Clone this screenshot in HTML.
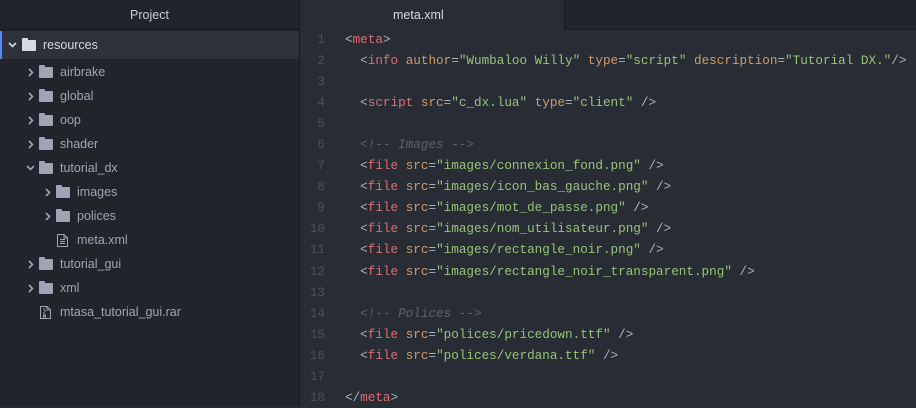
<!DOCTYPE html>
<html><head><style>
*{margin:0;padding:0;box-sizing:border-box}
body{width:916px;height:406px;overflow:hidden;background:#282c34;font-family:"Liberation Sans",sans-serif;position:relative}
#side{position:absolute;left:0;top:0;width:300px;height:406px;background:#21252b;border-right:1px solid #181a1f}
#side .hd{height:30px;line-height:30px;text-align:center;color:#c8ccd4;font-size:12.5px;border-bottom:1px solid #181a1f}
.row{position:absolute;left:0;width:299px;height:24px;line-height:24px;font-size:12.5px;color:#9da5b4}
.sel{background:#2c313a;color:#d7dae0;height:28px;line-height:28px}
.sel:before{content:"";position:absolute;left:0;top:0;width:2px;height:28px;background:#568af2}
.chev{position:absolute;top:0;width:8px;height:100%}
.chev svg{position:absolute;top:50%;margin-top:-4px}
.fold{position:absolute;width:14px;height:11px;top:50%;margin-top:-5px;background:#9da5b4;border-radius:1px}
.fold:before{content:"";position:absolute;left:0;top:-2px;width:6px;height:3px;background:#9da5b4;border-radius:1px 1px 0 0}
.sel .fold,.sel .fold:before{background:#d7dae0}
.lbl{position:absolute;top:0}
#tabs{position:absolute;left:301px;top:0;right:0;height:30px;background:#21252b}
#tab{position:absolute;left:0;top:0;width:264px;height:30px;background:#282c34;color:#d7dae0;font-size:12.5px;text-align:left;padding-left:92px;line-height:30px;border-right:1px solid #181a1f}
#tabs .rest{position:absolute;left:265px;right:0;bottom:0;height:1px;background:#181a1f}
#code{position:absolute;left:301px;top:29px;right:0;font-family:"Liberation Mono",monospace;font-size:12.65px}
.ln{height:21.06px;line-height:21.06px;white-space:pre;position:relative;color:#abb2bf}
.ln b{font-weight:normal;position:absolute;left:0;width:24px;text-align:right;color:#495162}
.ln span.c{position:absolute;left:44px}
.t{color:#e06c75}.a{color:#d19a66}.s{color:#98c379}.cm{color:#5c6370;font-style:italic}
</style></head><body>
<div id="side"><div class="hd">Project</div>
<div class="row sel" style="top:31px"><span class="chev" style="left:8px"><svg width="9" height="8"><path d="M1 2 L4.5 5.5 L8 2" stroke="#d7dae0" stroke-width="1.6" fill="none"/></svg></span><span class="fold" style="left:22px"></span><span class="lbl" style="left:43px">resources</span></div>
<div class="row" style="top:60px"><span class="chev" style="left:27px"><svg width="8" height="9"><path d="M2 1 L5.5 4.5 L2 8" stroke="#9da5b4" stroke-width="1.6" fill="none"/></svg></span><span class="fold" style="left:39px"></span><span class="lbl" style="left:60px">airbrake</span></div>
<div class="row" style="top:84px"><span class="chev" style="left:27px"><svg width="8" height="9"><path d="M2 1 L5.5 4.5 L2 8" stroke="#9da5b4" stroke-width="1.6" fill="none"/></svg></span><span class="fold" style="left:39px"></span><span class="lbl" style="left:60px">global</span></div>
<div class="row" style="top:108px"><span class="chev" style="left:27px"><svg width="8" height="9"><path d="M2 1 L5.5 4.5 L2 8" stroke="#9da5b4" stroke-width="1.6" fill="none"/></svg></span><span class="fold" style="left:39px"></span><span class="lbl" style="left:60px">oop</span></div>
<div class="row" style="top:132px"><span class="chev" style="left:27px"><svg width="8" height="9"><path d="M2 1 L5.5 4.5 L2 8" stroke="#9da5b4" stroke-width="1.6" fill="none"/></svg></span><span class="fold" style="left:39px"></span><span class="lbl" style="left:60px">shader</span></div>
<div class="row" style="top:156px"><span class="chev" style="left:26px"><svg width="9" height="8"><path d="M1 2 L4.5 5.5 L8 2" stroke="#9da5b4" stroke-width="1.6" fill="none"/></svg></span><span class="fold" style="left:39px"></span><span class="lbl" style="left:60px">tutorial_dx</span></div>
<div class="row" style="top:180px"><span class="chev" style="left:44px"><svg width="8" height="9"><path d="M2 1 L5.5 4.5 L2 8" stroke="#9da5b4" stroke-width="1.6" fill="none"/></svg></span><span class="fold" style="left:56px"></span><span class="lbl" style="left:77px">images</span></div>
<div class="row" style="top:204px"><span class="chev" style="left:44px"><svg width="8" height="9"><path d="M2 1 L5.5 4.5 L2 8" stroke="#9da5b4" stroke-width="1.6" fill="none"/></svg></span><span class="fold" style="left:56px"></span><span class="lbl" style="left:77px">polices</span></div>
<div class="row" style="top:228px"><svg style="position:absolute;left:56px;top:5px" width="13" height="15"><path d="M1.5 1.5 H8 L11.5 5 V13.5 H1.5 Z M8 1.5 V5 H11.5 M4 6.5 H9 M4 8.5 H9 M4 10.5 H9" stroke="#9da5b4" fill="none"/></svg><span class="lbl" style="left:77px">meta.xml</span></div>
<div class="row" style="top:252px"><span class="chev" style="left:27px"><svg width="8" height="9"><path d="M2 1 L5.5 4.5 L2 8" stroke="#9da5b4" stroke-width="1.6" fill="none"/></svg></span><span class="fold" style="left:39px"></span><span class="lbl" style="left:60px">tutorial_gui</span></div>
<div class="row" style="top:276px"><span class="chev" style="left:27px"><svg width="8" height="9"><path d="M2 1 L5.5 4.5 L2 8" stroke="#9da5b4" stroke-width="1.6" fill="none"/></svg></span><span class="fold" style="left:39px"></span><span class="lbl" style="left:60px">xml</span></div>
<div class="row" style="top:300px"><svg style="position:absolute;left:39px;top:5px" width="13" height="15"><path d="M1.5 1.5 H8 L11.5 5 V13.5 H1.5 Z M8 1.5 V5 H11.5 M5 3 V5 M6 5 V7 M5 7 V9 M4.5 10 H6.5 V12 H4.5 Z" stroke="#9da5b4" fill="none"/></svg><span class="lbl" style="left:60px">mtasa_tutorial_gui.rar</span></div>
</div>
<div id="tabs"><div id="tab">meta.xml</div><div class="rest"></div></div>
<div id="code">
<div class="ln"><b>1</b><span class="c">&lt;<span class="t">meta</span>&gt;</span></div>
<div class="ln"><b>2</b><span class="c">  &lt;<span class="t">info</span> <span class="a">author</span>=<span class="s">"Wumbaloo Willy"</span> <span class="a">type</span>=<span class="s">"script"</span> <span class="a">description</span>=<span class="s">"Tutorial DX."</span>/&gt;</span></div>
<div class="ln"><b>3</b></div>
<div class="ln"><b>4</b><span class="c">  &lt;<span class="t">script</span> <span class="a">src</span>=<span class="s">"c_dx.lua"</span> <span class="a">type</span>=<span class="s">"client"</span> /&gt;</span></div>
<div class="ln"><b>5</b></div>
<div class="ln"><b>6</b><span class="c">  <span class="cm">&lt;!-- Images --&gt;</span></span></div>
<div class="ln"><b>7</b><span class="c">  &lt;<span class="t">file</span> <span class="a">src</span>=<span class="s">"images/connexion_fond.png"</span> /&gt;</span></div>
<div class="ln"><b>8</b><span class="c">  &lt;<span class="t">file</span> <span class="a">src</span>=<span class="s">"images/icon_bas_gauche.png"</span> /&gt;</span></div>
<div class="ln"><b>9</b><span class="c">  &lt;<span class="t">file</span> <span class="a">src</span>=<span class="s">"images/mot_de_passe.png"</span> /&gt;</span></div>
<div class="ln"><b>10</b><span class="c">  &lt;<span class="t">file</span> <span class="a">src</span>=<span class="s">"images/nom_utilisateur.png"</span> /&gt;</span></div>
<div class="ln"><b>11</b><span class="c">  &lt;<span class="t">file</span> <span class="a">src</span>=<span class="s">"images/rectangle_noir.png"</span> /&gt;</span></div>
<div class="ln"><b>12</b><span class="c">  &lt;<span class="t">file</span> <span class="a">src</span>=<span class="s">"images/rectangle_noir_transparent.png"</span> /&gt;</span></div>
<div class="ln"><b>13</b></div>
<div class="ln"><b>14</b><span class="c">  <span class="cm">&lt;!-- Polices --&gt;</span></span></div>
<div class="ln"><b>15</b><span class="c">  &lt;<span class="t">file</span> <span class="a">src</span>=<span class="s">"polices/pricedown.ttf"</span> /&gt;</span></div>
<div class="ln"><b>16</b><span class="c">  &lt;<span class="t">file</span> <span class="a">src</span>=<span class="s">"polices/verdana.ttf"</span> /&gt;</span></div>
<div class="ln"><b>17</b></div>
<div class="ln"><b>18</b><span class="c">&lt;/<span class="t">meta</span>&gt;</span></div>
</div>
</body></html>
